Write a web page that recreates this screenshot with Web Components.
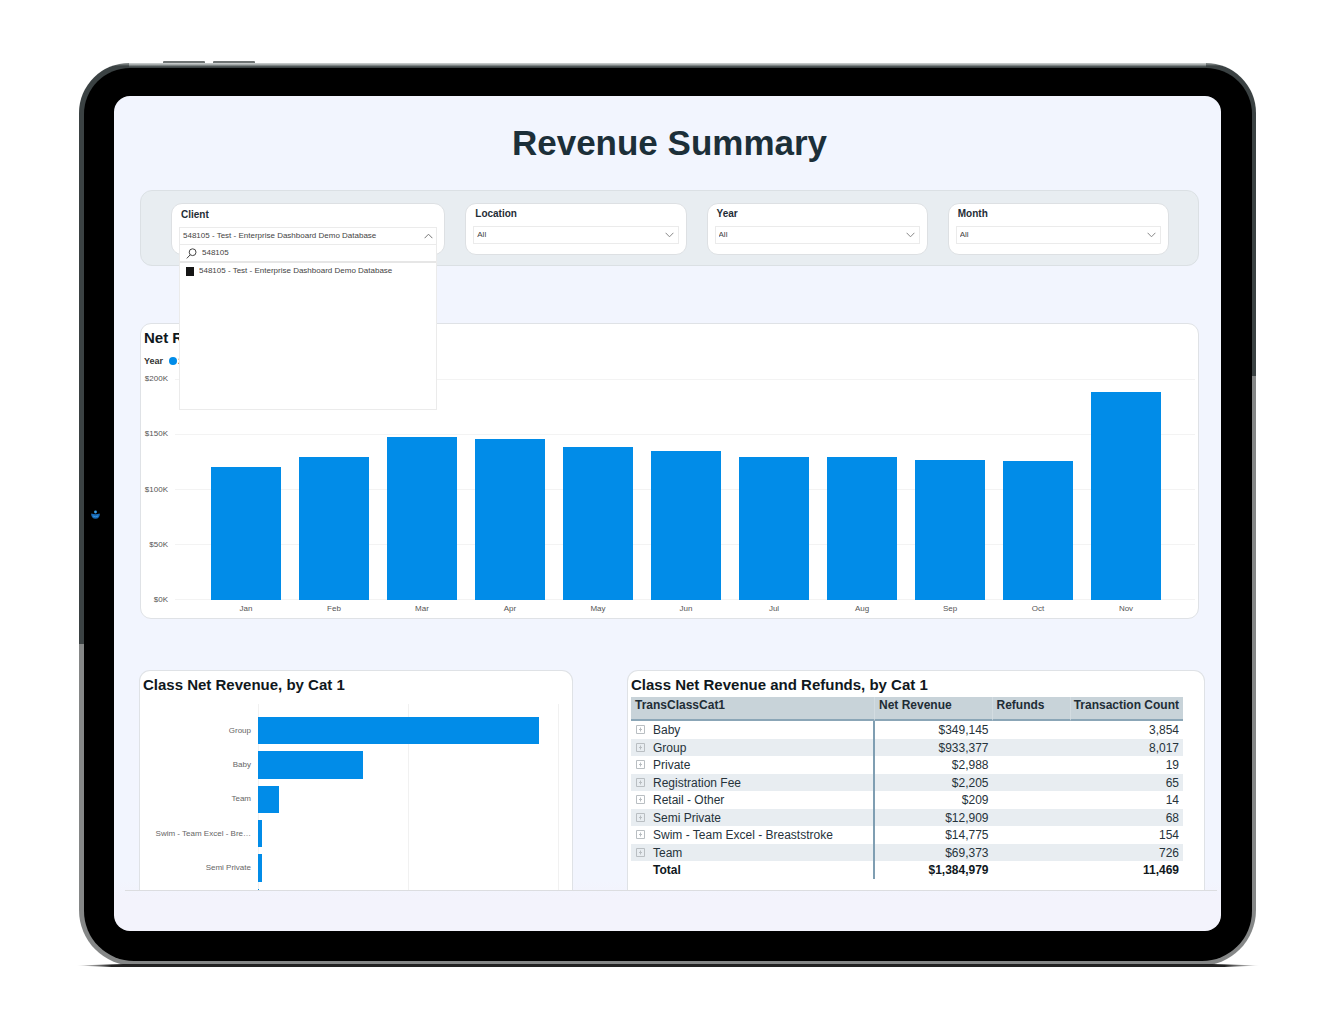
<!DOCTYPE html>
<html lang="en">
<head>
<meta charset="utf-8">
<title>Revenue Summary</title>
<style>
  body { margin: 0; background: #fff; font-family: "Liberation Sans", Arial, sans-serif; color: #1f2d36; }
</style>
</head>
<body>
<dashboard-page></dashboard-page>

<script>
const define = (name, html, setup) => {
  const template = document.createElement('template');
  template.innerHTML = html;
  customElements.define(name, class extends HTMLElement {
    constructor() {
      super();
      this.attachShadow({ mode: 'open' }).append(template.content.cloneNode(true));
    }
    connectedCallback() { if (setup) setup(this, this.shadowRoot); }
  });
};

/* Tablet body around the slotted screen */
define('tablet-frame', `
  <style>
    :host { display: block; position: relative; }
    .body {
      padding: 5px 4px 5px 5px; border-radius: 50px 50px 56px 56px;
      background:
        linear-gradient(#c4c8c8 0 1px, #8c9292 2px, transparent 4px) 50px 0 / calc(100% - 100px) 5px no-repeat,
        linear-gradient(#7d8383 0 1px, #3b4243 3px 64.3%, #858787 64.3%) left / 50% 100% no-repeat,
        linear-gradient(#7d8383 0 1px, #3b4243 3px 34.7%, #858787 34.7%) right / 100% 100% no-repeat;
    }
    .bezel { background: #000; border-radius: 46px 46px 50px 50px; padding: 28px 31px 30px 30px; }
    .screen { background: linear-gradient(#f2f5fe 94%, #f3f3fc 96%); border-radius: 16px; overflow: hidden; }
    .key { position: absolute; top: -2px; width: 42px; height: 2px; background: #6f7474; border-radius: 1px 1px 0 0; }
    .key.one { left: 84px; }
    .key.two { left: 134px; }
    .camera { position: absolute; left: 12px; top: calc(50% - 5px); width: 9px; height: 9px; }
    .camera svg { display: block; }
    .shadow {
      position: absolute; left: -3px; right: -4px; bottom: -1px; height: 3px;
      background: linear-gradient(to right, transparent, #222 3%, #222 97%, transparent);
      clip-path: polygon(0 50%, 4% 0, 96% 0, 100% 50%, 97% 100%, 3% 100%);
    }
  </style>
  <div class="key one"></div><div class="key two"></div>
  <div class="body"><div class="bezel"><div class="screen"><slot></slot></div></div></div>
  <div class="shadow"></div>
  <div class="camera"><svg width="9" height="9" viewBox="0 0 9 9" aria-hidden="true">
    <path d="M.3 3.6 A4.3 4.3 0 1 0 8.7 3.6 Q4.5 5 .3 3.6Z" fill="#1769b5"/>
    <path d="M2 6Q4.5 7.5 7 6" stroke="#3792dc" fill="none"/>
    <circle cx="4.5" cy="2" r="1.4" fill="#3aa2ef"/></svg></div>
`);

/* Closed slicer with a native drop-down */
define('filter-card', `
  <style>
    :host { display: block; box-sizing: border-box; background: #fff; border: 1px solid #dde0e3; border-radius: 11px; padding: 2px 7px 10px; }
    label { display: block; padding-left: 2px; font: bold 10px/16px "Liberation Sans", sans-serif; color: #1f2d36; }
    .box { display: grid; align-items: center; margin-top: 4px; border: 1px solid #ebebeb; }
    select, svg { grid-area: 1 / 1; }
    select { appearance: none; width: 100%; height: 16px; margin: 0; padding: 0 3px; border: 0; border-radius: 0; background: none; font: 8px/16px "Liberation Sans", sans-serif; color: #444; }
    svg { justify-self: end; margin-right: 4px; pointer-events: none; }
  </style>
  <label for="value"></label>
  <div class="box">
    <select id="value"><option>All</option></select>
    <svg width="9" height="6" viewBox="0 0 9 6" fill="none" stroke="#888"><path d="M.6 .8 4.5 4.8 8.4 .8"/></svg>
  </div>
`, (el, root) => { root.querySelector('label').textContent = el.getAttribute('label'); });

/* Open slicer: search row and result list drop over the content below */
define('client-picker', `
  <style>
    :host { display: block; box-sizing: border-box; background: #fff; border: 1px solid #dde0e3; border-radius: 11px; padding: 3px 7px 9px; }
    .title { padding-left: 2px; font: bold 10px/16px "Liberation Sans", sans-serif; color: #1f2d36; }
    .anchor { position: relative; margin-top: 4px; }
    button { display: flex; align-items: center; justify-content: space-between; box-sizing: border-box; width: 100%; height: 18px; margin: 0; padding: 0 3px; border: 1px solid #ebebeb; background: #fff; font: 8px/16px "Liberation Sans", sans-serif; color: #444; }
    .menu { position: absolute; top: 100%; left: 0; right: 0; box-sizing: border-box; height: 165px; border: 1px solid #ebebeb; border-top: 0; background: #fff; }
    .search { display: flex; align-items: center; gap: 5px; padding: 0 6px; border-bottom: 2px solid #e6e6e6; }
    input[type=text] { flex: 1; min-width: 0; height: 16px; padding: 0; border: 0; outline: 0; background: none; font: 8px/16px "Liberation Sans", sans-serif; color: #444; }
    .option { display: flex; align-items: center; gap: 5px; padding: 0 6px; font-size: 8px; line-height: 16px; color: #444; }
    input[type=checkbox] { appearance: none; width: 8px; height: 9px; margin: 0; background: #151515; }
  </style>
  <div class="title" id="t">Client</div>
  <div class="anchor">
    <button type="button" aria-expanded="true" aria-labelledby="t"><span>548105 - Test - Enterprise Dashboard Demo Database</span>
      <svg width="9" height="6" viewBox="0 0 9 6" fill="none" stroke="#777"><path d="M.6 5.2 4.5 1.2 8.4 5.2"/></svg></button>
    <div class="menu">
      <div class="search">
        <svg width="11" height="11" viewBox="0 0 11 11" fill="none" stroke="#444"><circle cx="6.6" cy="4.2" r="3.4"/><path d="M4.2 6.8.8 10.4"/></svg>
        <input type="text" aria-label="Search" value="548105">
      </div>
      <label class="option"><input type="checkbox" checked><span>548105 - Test - Enterprise Dashboard Demo Database</span></label>
    </div>
  </div>
`);

define('report-card', `
  <style>
    :host { display: block; box-sizing: border-box; background: #fff; border: 1px solid #dfe2e6; border-radius: 11px; padding: 4px 3px 0; }
    :host([cut]) { border-bottom: 0; border-radius: 11px 11px 0 0; }
    h2 { margin: 0; font: bold 15px/20px "Liberation Sans", sans-serif; color: #10181d; }
  </style>
  <h2></h2><slot></slot>
`, (el, root) => { root.querySelector('h2').textContent = el.getAttribute('heading'); });

/* Monthly columns, values in thousands on a 0-200 scale */
define('column-chart', `
  <style>
    :host { display: block; padding-bottom: 4px; color: #555; font-size: 8px; }
    .legend { display: flex; align-items: center; gap: 6px; height: 12px; margin-top: 7px; font: bold 9px/12px "Liberation Sans", sans-serif; color: #333; }
    .item { display: flex; align-items: center; gap: 1px; font-weight: normal; }
    .dot { width: 8px; height: 8px; border-radius: 50%; background: #018ce8; }
    .chart { display: grid; grid-template-columns: 24px 1fr; column-gap: 7px; margin-top: 7px; }
    .axis { display: flex; flex-direction: column; justify-content: space-between; align-items: flex-end; line-height: 10px; }
    .plot { height: 221px; margin: 5px 0; display: flex; padding: 0 25px 0 27px; background: repeating-linear-gradient(#f3f3f3 0 1px, transparent 1px 55px); }
    .slot { flex: 1; display: flex; align-items: flex-end; padding: 0 9px; }
    .bar { flex: 1; background: #018ce8; }
    .months { grid-column: 2; display: flex; padding: 0 25px 0 27px; line-height: 10px; margin-top: -1px; }
    .months span { flex: 1; text-align: center; }
  </style>
  <div class="legend"><span>Year</span><span class="item"><i class="dot"></i><span>2023</span></span></div>
  <div class="chart">
    <div class="axis"><span>$200K</span><span>$150K</span><span>$100K</span><span>$50K</span><span>$0K</span></div>
    <div class="plot"></div>
    <div class="months"></div>
  </div>
`, (el, root) => {
  const data = { Jan: 120.5, Feb: 129, Mar: 147.5, Apr: 146, May: 138.3, Jun: 134.8, Jul: 129.7, Aug: 129.7, Sep: 126.6, Oct: 126, Nov: 188 };
  root.querySelector('.plot').innerHTML = Object.values(data).map(v => `<div class="slot"><div class="bar" style="height:${v / 2}%"></div></div>`).join('');
  root.querySelector('.months').innerHTML = Object.keys(data).map(m => `<span>${m}</span>`).join('');
});

/* Horizontal bars, values in thousands on a 0-1000 scale */
define('bar-chart', `
  <style>
    :host { display: block; height: 186px; margin-top: 9px; overflow: hidden; font-size: 8px; color: #666; }
    .rows { height: 206px; padding: 9px 10px 0 0; display: grid; grid-template-columns: 108px 1fr; grid-template-rows: repeat(6, 1fr); column-gap: 7px; }
    .label { grid-column: 1; align-self: center; text-align: right; white-space: nowrap; }
    .track { grid-column: 2; padding: 4px 0 3px; display: flex; }
    .bar { background: #018ce8; }
    .grid { grid-column: 2; grid-row: 1 / -1; margin-top: -9px; display: flex; justify-content: space-between; }
    .grid i { width: 1px; background: #f1f1f1; }
  </style>
  <div class="rows"><div class="grid"><i></i><i></i><i></i></div></div>
`, (el, root) => {
  const data = [['Group', 933.4], ['Baby', 349.1], ['Team', 69.4], ['Swim - Team Excel - Bre…', 14.8], ['Semi Private', 12.9], ['', 3]];
  root.querySelector('.rows').insertAdjacentHTML('beforeend', data.map(([name, v], i) =>
    `<span class="label" style="grid-row:${i + 1}">${name}</span><div class="track" style="grid-row:${i + 1}"><div class="bar" style="width:${v / 10}%"></div></div>`).join(''));
});

define('revenue-matrix', `
  <style>
    :host { display: block; padding-right: 18px; margin-top: 2px; }
    table { width: 100%; table-layout: fixed; border-collapse: separate; border-spacing: 0; font-size: 12px; line-height: 16px; color: #26333b; }
    th, td { padding: 0 4px; text-align: right; white-space: nowrap; }
    thead th { height: 22px; text-align: left; vertical-align: top; background: #c8d3d9; border-bottom: 2px solid #8ba6b7; border-right: 1px solid #d3dce1; color: #1f2d36; }
    thead th:last-child { border-right: 0; padding-left: 0; text-align: right; }
    tbody tr > *, tfoot tr > * { height: 18px; }
    tbody tr:nth-child(even) > * { height: 17px; background: #e8edf1; }
    tbody th, tfoot th { text-align: left; font-weight: normal; border-right: 2px solid #7f9eb2; }
    tfoot tr > * { font-weight: bold; color: #10181d; }
    tfoot th { padding-left: 22px; }
    .name { display: flex; align-items: center; gap: 7px; padding-left: 1px; }
    button { display: flex; width: 10px; height: 10px; padding: 0; border: 0; background: none; }
    .c1 { width: 44.2%; } .c2 { width: 21.3%; } .c3 { width: 14.3%; }
  </style>
  <table>
    <colgroup><col class="c1"><col class="c2"><col class="c3"><col></colgroup>
    <thead><tr><th scope="col">TransClassCat1</th><th scope="col">Net Revenue</th><th scope="col">Refunds</th><th scope="col">Transaction Count</th></tr></thead>
    <tbody></tbody>
    <tfoot><tr><th scope="row">Total</th><td>$1,384,979</td><td></td><td>11,469</td></tr></tfoot>
  </table>
`, (el, root) => {
  const rows = [['Baby', '$349,145', '3,854'], ['Group', '$933,377', '8,017'], ['Private', '$2,988', '19'], ['Registration Fee', '$2,205', '65'],
    ['Retail - Other', '$209', '14'], ['Semi Private', '$12,909', '68'], ['Swim - Team Excel - Breaststroke', '$14,775', '154'], ['Team', '$69,373', '726']];
  root.querySelector('tbody').innerHTML = rows.map(([n, r, c]) => `<tr><th scope="row"><div class="name">
    <button type="button" aria-label="Expand ${n}"><svg width="10" height="10" viewBox="0 0 10 10" fill="none" stroke="#b9bec2"><path d="M.5.5h8v8h-8zM4.5 2.5v4M3 4.5h3"/></svg></button>
    <span>${n}</span></div></th><td>${r}</td><td></td><td>${c}</td></tr>`).join('');
});

define('dashboard-page', `
  <style>
    :host { display: block; padding: 63px 87px 64px 79px; }
    main { margin: 0 4px 40px 11px; padding: 25px 12px 0 14px; border-bottom: 1px solid #dcdde0; }
    h1 { margin: 0; text-align: center; font: bold 35px/44px "Liberation Sans", sans-serif; color: #1c2f39; }
    .wide { margin: 0 6px 0 1px; }
    .filters { position: relative; z-index: 1; display: grid; grid-template-columns: 274fr 221fr 221fr 221fr; gap: 20px; margin-top: 25px; padding: 12px 29px 10px 30px; background: #e8edf1; border: 1px solid #dbe0e4; border-radius: 12px; }
    .monthly { margin-top: 57px; }
    .lower { display: grid; grid-template-columns: 434fr 578fr; gap: 54px; margin-top: 51px; }
  </style>
  <tablet-frame>
    <main>
      <h1 class="wide">Revenue Summary</h1>
      <div class="filters wide">
        <client-picker></client-picker>
        <filter-card label="Location"></filter-card>
        <filter-card label="Year"></filter-card>
        <filter-card label="Month"></filter-card>
      </div>
      <report-card class="monthly wide" heading="Net Revenue"><column-chart></column-chart></report-card>
      <div class="lower">
        <report-card cut heading="Class Net Revenue, by Cat 1"><bar-chart></bar-chart></report-card>
        <report-card cut heading="Class Net Revenue and Refunds, by Cat 1"><revenue-matrix></revenue-matrix></report-card>
      </div>
    </main>
  </tablet-frame>
`);
</script>
</body>
</html>
